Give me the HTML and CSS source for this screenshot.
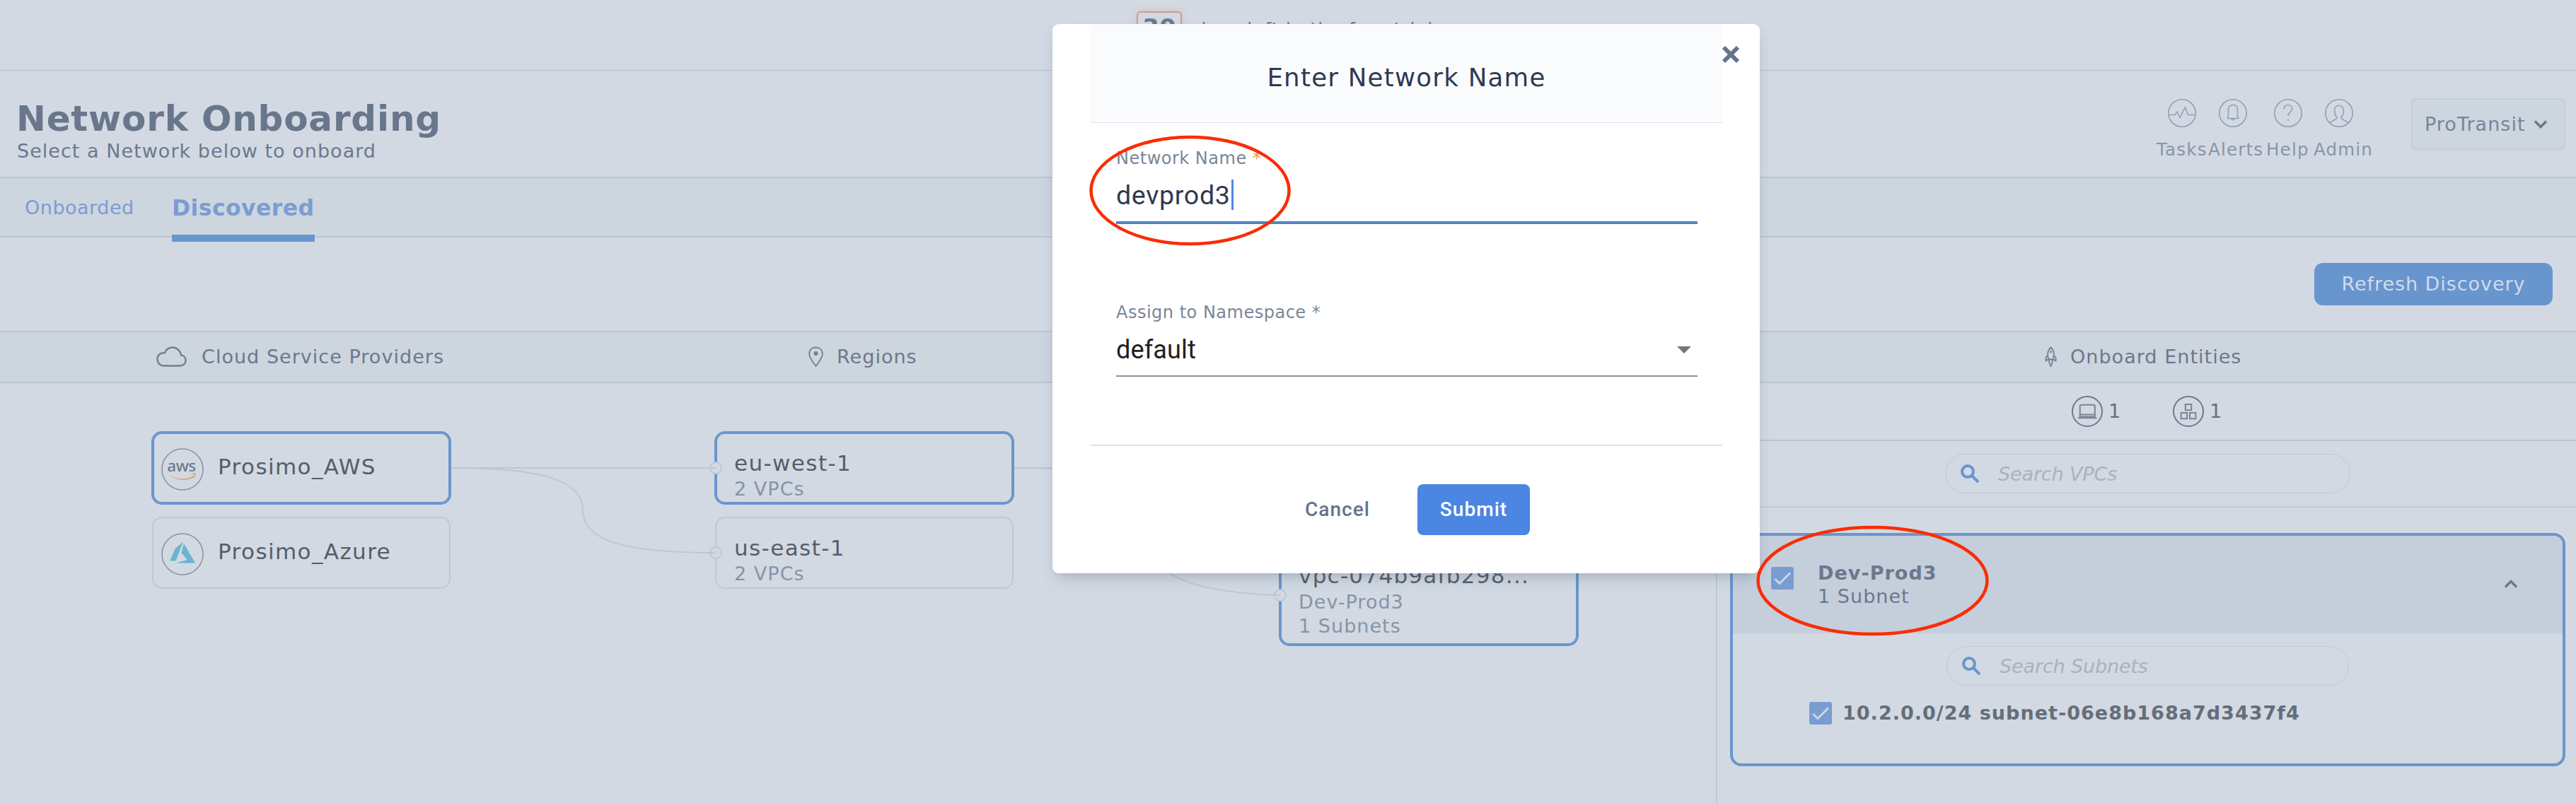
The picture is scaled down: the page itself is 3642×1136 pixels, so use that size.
FILE: index.html
```html
<!DOCTYPE html>
<html lang="en">
<head>
<meta charset="utf-8">
<title>Network Onboarding</title>
<link rel="stylesheet" href="styles.css">
</head>
<body>
<div class="page">
  <div class="trial"><span class="trial-count">30</span><span class="trial-text">days left in the free trial</span></div>

  <header class="header">
    <div class="heading">
      <h1 class="title">Network Onboarding</h1>
      <p class="subtitle">Select a Network below to onboard</p>
    </div>
    <nav class="tools">
      <a class="tool tasks"><svg width="40" height="40" viewBox="0 0 40 40"><circle cx="20" cy="20" r="19.2"/><path d="M1 22.5h9l3-4.500 4 8.500 7.500-14.500 4 10.500h10.500"/></svg>Tasks</a>
      <a class="tool alerts"><svg width="40" height="40" viewBox="0 0 40 40"><circle cx="20" cy="20" r="19.2"/><path d="M11.500 27.500c1.500-.8 2-3 2-5.500v-6.500c0-4.500 2.500-7 6.500-7s6.500 2.500 6.500 7V22c0 2.500.5 4.700 2 5.500zM18 27.700c0 2.600 4 2.600 4 0"/></svg>Alerts</a>
      <a class="tool help"><svg width="40" height="40" viewBox="0 0 40 40"><circle cx="20" cy="20" r="19.2"/><path d="M14.200 14.500c0-3.800 2.400-6 5.800-6s5.700 2.200 5.700 5.300c0 4.700-5.700 4.700-5.700 10.200"/><circle class="dot" cx="20" cy="29.800" r="1.200"/></svg>Help</a>
      <a class="tool admin"><svg width="40" height="40" viewBox="0 0 40 40"><circle cx="20" cy="20" r="19.2"/><path d="M7 33.800c3-3.600 9.500-4 10.300-7.600-2.600-2.400-3.700-5.700-3.700-9.200 0-5 2.400-7.700 6.400-7.700s6.400 2.700 6.400 7.700c0 3.500-1.100 6.800-3.700 9.200.8 3.600 7.300 4 10.300 7.600"/></svg>Admin</a>
    </nav>
    <div class="tenant">ProTransit<svg width="20" height="14" viewBox="0 0 20 14"><path d="M2 2.500l8 8 8-8"/></svg></div>
  </header>

  <div class="tabs"><a class="tab">Onboarded</a><a class="tab tab-active">Discovered</a></div>

  <div class="toolbar"><button class="refresh">Refresh Discovery</button></div>

  <div class="columns">
    <div class="column column-providers"><svg width="43" height="30" viewBox="0 0 43 30"><path d="M10.500 27.500h22.500c4.800 0 8.500-3 8.500-7.500 0-4.300-2.800-7.200-6.500-7.600C34.200 6 29 1.500 23 1.500c-5 0-9 2.700-10.800 7.500C6 8.500 1.500 12.500 1.500 18c0 5.500 4 9.500 9 9.500z"/></svg>Cloud Service Providers</div>
    <div class="column column-regions"><svg class="thin" width="21" height="30" viewBox="0 0 21 30"><path d="M10.500 28C6 21.500 1.200 16.500 1.200 10.500 1.200 4.800 5 1.500 10.500 1.500s9.300 3.300 9.300 9c0 6-4.800 11-9.300 17.500z"/><circle class="fill" cx="10.500" cy="10" r="3"/></svg>Regions</div>
    <div class="column column-vpcs"></div>
    <div class="column column-entities"><svg class="thin" width="17" height="30" viewBox="0 0 17 30"><path d="M8.500 1.500c-4.600 4.500-5.500 10.500-3 17h6c2.500-6.500 1.600-12.500-3-17zM4.300 12.500L1.500 16v4.500L5.500 18M12.700 12.500l2.800 3.500v4.500L11.500 18M6.200 18.500c-.6 4 .4 6.500 2.300 9.500 1.900-3 2.900-5.500 2.300-9.500"/><circle class="fill" cx="8.500" cy="7.800" r="1.500"/></svg>Onboard Entities</div>
  </div>

  <div class="main">
    <div class="canvas">
      <svg class="edges" width="2426" height="594" viewBox="0 0 2426 594">
        <path d="M638 120H1012M638 120C760 120 824 135 824 180S890 240 1012 240M1434 120H1809M1434 120C1560 120 1622 135 1622 210C1622 275 1690 296 1809 300"/>
      </svg>
      <div class="node node-selected node-aws">
        <svg class="logo" width="60" height="60" viewBox="0 0 60 60"><circle cx="30" cy="30" r="29"/><text x="28.500" y="33" text-anchor="middle">aws</text><path class="smile" d="M8.500 36c12 9 27 9.500 38 2.800l1.200 1.700C36 47.500 20 46.500 8.500 36zM42 37c2-1.600 4.500-1.600 6.500-1.200.4 2.200-.5 4.800-2.200 6.400.6-1.600 1.300-3.500.7-4.600-1.300-.6-3.300-.4-5-.6z"/></svg>
        <span class="node-title">Prosimo_AWS</span>
      </div>
      <div class="node node-azure">
        <svg class="logo" width="60" height="60" viewBox="0 0 60 60"><circle cx="30" cy="30" r="29"/><path class="azure" d="M31 12.500L20 21.500 12 39.500h8.500zM32 15l-3.500 13 8 10-16 4.500H48z"/></svg>
        <span class="node-title">Prosimo_Azure</span>
      </div>
      <div class="node node-selected node-eu"><div class="node-title">eu-west-1</div><div class="node-sub">2 VPCs</div></div>
      <div class="node node-us"><div class="node-title">us-east-1</div><div class="node-sub">2 VPCs</div></div>
      <div class="node node-selected node-vpc"><div class="node-title">vpc-074b9afb298...</div><div class="node-sub">Dev-Prod3</div><div class="node-sub">1 Subnets</div></div>
      <svg class="edges" width="2426" height="594" viewBox="0 0 2426 594">
        <g class="port"><circle cx="1012" cy="120" r="8"/><circle cx="1012" cy="240" r="8"/><circle cx="1810" cy="300" r="8"/></g>
        <path d="M1000 120H1012M1000 240H1012M1798 299.500L1810 300"/>
      </svg>
    </div>

    <aside class="panel">
      <div class="counts">
        <span class="count"><svg width="44" height="44" viewBox="0 0 44 44"><circle cx="22" cy="22" r="21"/><path d="M11.700 30.300V14.500a1.800 1.800 0 0 1 1.800-1.800h17.500a1.800 1.800 0 0 1 1.800 1.800v15.800M11.700 26.500h21.100M11.700 29.500h21.100M9 31.200h26.500"/></svg>1</span>
        <span class="count"><svg width="44" height="44" viewBox="0 0 44 44"><circle cx="22" cy="22" r="21"/><path d="M17.800 12h8.400v8.200h-8.400zM11.700 24h8.400v8.200h-8.400zM24 24h8.400v8.200H24z"/></svg>1</span>
      </div>
      <div class="search-row"><div class="search"><svg width="27" height="27" viewBox="0 0 27 27"><circle cx="10" cy="10" r="8"/><path d="M15.500 15.500l9.500 9.500"/></svg>Search VPCs</div></div>
      <section class="entity">
        <div class="entity-head">
          <span class="check"><svg width="32" height="32" viewBox="0 0 32 32"><path d="M5.500 17l6.500 6.500L27 8.500"/></svg></span>
          <div class="entity-name"><div class="entity-title">Dev-Prod3</div><div class="entity-sub">1 Subnet</div></div>
          <svg class="caret" width="20" height="14" viewBox="0 0 20 14"><path d="M2 11.500l8-8 8 8"/></svg>
        </div>
        <div class="search search-subnets"><svg width="27" height="27" viewBox="0 0 27 27"><circle cx="10" cy="10" r="8"/><path d="M15.500 15.500l9.500 9.500"/></svg>Search Subnets</div>
        <div class="subnet"><span class="check"><svg width="32" height="32" viewBox="0 0 32 32"><path d="M5.500 17l6.500 6.500L27 8.500"/></svg></span>10.2.0.0/24 subnet-06e8b168a7d3437f4</div>
      </section>
    </aside>
  </div>

  <div class="modal">
    <div class="modal-head">Enter Network Name</div>
    <div class="modal-body">
      <div class="label">Network Name <span class="star">*</span></div>
      <div class="input">devprod3<span class="cursor"></span></div>
      <div class="label label-second">Assign to Namespace *</div>
      <div class="select">default<span class="arrow"></span></div>
    </div>
    <div class="modal-foot"><button class="cancel">Cancel</button><button class="submit">Submit</button></div>
    <svg class="close" width="26" height="26" viewBox="0 0 26 26"><path d="M3 3l20 20M23 3L3 23"/></svg>
  </div>

  <svg class="marks" width="3642" height="1136" viewBox="0 0 3642 1136">
    <ellipse cx="1682.500" cy="269.500" rx="140" ry="75.500"/>
    <ellipse cx="2647.500" cy="821.500" rx="162" ry="75.500"/>
  </svg>
</div>
</body>
</html>
```
FILE: styles.css
```css
* { box-sizing: border-box; }
body { margin: 0; background: #d2d9e3; font-family: "DejaVu Sans", sans-serif; font-size: 27px; line-height: 30px; letter-spacing: 1.03px; color: #6b788d; }
svg { display: block; flex: none; fill: none; }
button { border: 0; padding: 0; background: none; font: inherit; letter-spacing: inherit; color: inherit; }
.page { position: relative; width: 3642px; height: 1136px; overflow: hidden; white-space: nowrap; }

.trial { height: 100px; border-bottom: 1px solid #b0bccb; display: flex; align-items: flex-start; padding: 16px 0 0 1607px; }
.trial-count { width: 64px; height: 56px; border: 2px solid #c99f8f; border-radius: 5px; box-shadow: 0 0 8px 2px #dbc6c3; font-weight: bold; font-size: 34px; line-height: 42px; letter-spacing: 0; text-align: center; }
.trial-text { margin: 11px 0 0 18px; font-size: 26px; letter-spacing: 0.87px; }

.header { height: 152px; border-bottom: 2px solid #b9c5d3; display: flex; }
.heading { width: 3049px; padding: 38px 0 0 23px; }
.title { margin: 0; font-size: 50px; line-height: 60px; letter-spacing: 0.8px; color: #69778c; }
.subtitle { margin: 1px 0 0 1px; }
.tools { display: flex; width: 360px; padding-top: 40px; font-size: 24.5px; letter-spacing: 1.2px; color: #8995a8; }
.tool { display: flex; flex-direction: column; line-height: 28px; gap: 18px; }
.tool svg { stroke: #93a0b4; stroke-width: 1.6; }
.tool .dot { fill: #93a0b4; stroke: none; }
.tasks { width: 73px; }
.tasks svg { margin-left: 16px; }
.alerts { width: 82px; }
.alerts svg { margin-left: 15px; }
.help { width: 67px; }
.help svg { margin-left: 11px; }
.admin svg { margin-left: 16px; }
.tenant { width: 218px; height: 73px; margin-top: 39px; border: 2px solid #c3ccda; border-radius: 8px; background: #cdd5df; display: flex; align-items: center; padding: 1px 0 0 17px; gap: 11px; color: #76849a; }
.tenant svg { stroke: #69778c; stroke-width: 3.5; }

.tabs { height: 84px; border-bottom: 2px solid #b9c5d3; background: #cdd5df; display: flex; align-items: flex-start; padding-left: 35px; color: #7b9dd0; }
.tab { width: 208px; padding-top: 27px; letter-spacing: 0.51px; }
.tab-active { width: 202px; height: 90px; padding-top: 24px; border-bottom: 10px solid #6895ce; font-size: 31.5px; font-weight: bold; line-height: 36px; letter-spacing: 0.4px; }

.toolbar { height: 132px; display: flex; justify-content: flex-end; padding: 36px 33px 0 0; }
.refresh { width: 337px; height: 60px; border-radius: 12px; background: #6895ce; color: #d0dbec; letter-spacing: 0.94px; }

.columns { height: 74px; border: solid #b9c5d3; border-width: 2px 0; background: #cdd5df; display: flex; }
.column { display: flex; align-items: center; }
.column svg { stroke: #737f91; stroke-width: 2.4; }
.column .thin { stroke-width: 1.8; }
.column .fill { fill: #737f91; stroke: none; }
.column-providers { width: 852px; padding-left: 221px; gap: 21px; }
.column-regions { width: 740px; padding-left: 291px; gap: 19px; }
.column-vpcs { width: 834px; }
.column-entities { width: 1216px; padding-left: 465px; gap: 19px; }

.main { height: 594px; display: flex; }
.canvas { position: relative; width: 2426px; }
.edges { position: absolute; left: 0; top: 0; stroke: #bcc7d6; stroke-width: 2; }
.port { fill: #d2d9e3; }
.node { position: absolute; width: 422px; height: 102px; border: 2px solid #bec8d6; border-radius: 14px; background: #d2d9e3; padding: 24px 0 0 25px; }
.node-selected { border-color: #6a95cc; box-shadow: 0 0 0 1px #6a95cc, inset 0 0 0 1px #6a95cc; }
.node-title { font-size: 31px; line-height: 36px; letter-spacing: 1.4px; color: #555e6a; }
.node-sub { margin-top: 4px; color: #8794a6; }
.node-aws, .node-azure { left: 215px; display: flex; padding: 21px 0 0 11px; gap: 20px; }
.node-aws { top: 69px; }
.node-azure { top: 189px; }
.node-aws .node-title, .node-azure .node-title { margin-top: 8px; }
.node-eu { left: 1011px; top: 69px; }
.node-us { left: 1011px; top: 189px; }
.node-vpc { left: 1809px; top: 229px; height: 142px; padding-top: 23px; }
.node-vpc .node-title { letter-spacing: 1.28px; }
.node-vpc .node-sub { margin-top: 4.500px; }
.logo circle { stroke: #8a929f; stroke-width: 1.6; }
.logo text { font: 500 22.500px "Noto Sans", sans-serif; letter-spacing: -0.5px; fill: #6d7a8e; }
.logo .smile { fill: #d0a877; }
.logo .azure { fill: #6cb3d0; }

.panel { width: 1216px; border-left: 2px solid #bec8d6; }
.counts { height: 82px; border-bottom: 2px solid #b9c5d3; display: flex; padding: 18px 0 0 501px; color: #666f7c; }
.count { display: flex; align-items: center; width: 143px; height: 44px; gap: 8px; }
.count svg { stroke: #6b788d; stroke-width: 2; }
.count path { stroke: #7a8492; }
.search-row { height: 94px; border-bottom: 2px solid #bec8d6; padding: 18px 0 0 322px; }
.search { width: 573px; height: 56px; border: 1.500px solid #bfc8d7; border-radius: 28px; display: flex; align-items: center; gap: 26px; padding: 1px 0 0 21px; font-style: italic; letter-spacing: -0.14px; color: #a8b2c1; }
.search svg { stroke: #6a95cc; stroke-width: 4; }
.entity { height: 330px; margin: 36px 15px 0 18px; border: 4px solid #6a95cc; border-radius: 16px; }
.entity-head { height: 138px; border-radius: 12px 12px 0 0; background: #c5cedb; display: flex; align-items: flex-start; padding: 38px 0 0 54px; }
.check { width: 32px; height: 32px; margin-top: 6px; border-radius: 3px; background: #799cd3; flex: none; }
.check svg { stroke: #d2d9e3; stroke-width: 2.800; }
.entity-name { width: 970px; margin-left: 34px; }
.entity-title { font-weight: bold; letter-spacing: 1.03px; }
.entity-sub { margin-top: 3px; }
.caret { margin-top: 23px; stroke: #6b788d; stroke-width: 3.5; }
.search-subnets { width: 569px; margin: 18px 0 0 302px; }
.subnet { display: flex; align-items: center; margin: 23px 0 0 108px; font-weight: bold; letter-spacing: 1.02px; color: #656e79; gap: 15px; }
.subnet .check { margin-top: 0; }

.modal { position: absolute; left: 1488px; top: 34px; width: 1000px; height: 777px; padding: 0 53px 0 54px; border-radius: 9px; background: #fff; box-shadow: 0 10px 20px -6px rgba(70, 85, 110, 0.35); }
.modal-head { height: 140px; border-bottom: 1px solid #dfe3e8; border-radius: 8px 8px 0 0; background: #fafbfd; padding-top: 51px; text-align: center; font-size: 35.5px; line-height: 50px; letter-spacing: 1.3px; color: #2f3a50; }
.modal-body { height: 457px; border-bottom: 2px solid #dfe1e5; padding: 36px 35px 0 36px; }
.label { font-size: 24px; line-height: 28px; letter-spacing: 0.5px; color: #7a8698; }
.star { color: #ec9a58; }
.input { height: 79px; border-bottom: 4px solid #5284c4; display: flex; padding-top: 16px; font: 37.5px/44px Roboto, sans-serif; letter-spacing: 0.7px; color: #2f3a50; }
.cursor { width: 3px; height: 43px; margin-left: 1px; background: #4f86e0; }
.label-second { margin-top: 111px; }
.select { height: 77px; border-bottom: 2px solid #8f9194; display: flex; justify-content: space-between; padding: 17px 9px 0 0; font: 36px/44px Roboto, sans-serif; letter-spacing: 0.15px; color: #212121; }
.arrow { margin-top: 17px; width: 20px; height: 10px; background: #757575; clip-path: polygon(0 0, 100% 0, 50% 100%); }
.modal-foot { display: flex; padding: 54px 0 0 303px; font: 500 28px/72px Roboto, sans-serif; letter-spacing: 1.05px; color: #66738a; }
.cancel { width: 159px; text-align: left; }
.submit { width: 159px; height: 72px; border-radius: 8px; background: #4a86e2; color: #fff; }
.close { position: absolute; left: 946px; top: 30px; stroke: #66738a; stroke-width: 6; }

.marks { position: absolute; left: 0; top: 0; stroke: #f92d06; stroke-width: 4.5; pointer-events: none; }
```
